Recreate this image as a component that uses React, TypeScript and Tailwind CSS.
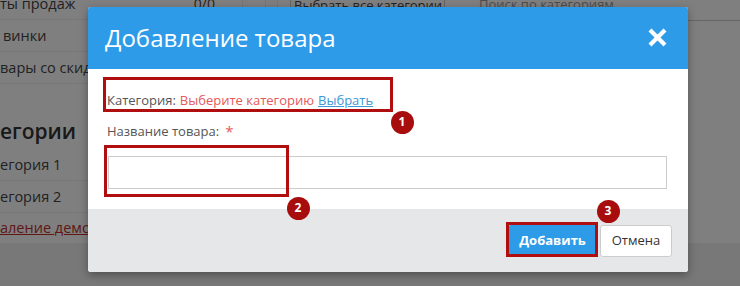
import React from "react";

const font = { fontFamily: '"Open Sans", "Noto Sans", Arial, sans-serif' };

function Badge({ n, x, y }: { n: number; x: number; y: number }) {
  return (
    <div
      className="absolute flex items-center justify-center w-[23px] h-[23px] rounded-full bg-[#a80d0d] text-white text-[12px] font-bold leading-none"
      style={{ left: x - 11.5, top: y - 11.5 }}
    >
      {n}
    </div>
  );
}

export default function App() {
  return (
    <div className="relative w-[740px] h-[286px] overflow-hidden bg-white text-[#444]" style={font}>
      {/* Background page */}
      <div className="flex w-full h-full">
        <div className="w-[242px] flex flex-col text-[14.5px] whitespace-nowrap">
          <div className="flex items-center justify-between h-[32px] -mt-[12px] border-b border-[#eee] pr-[27px]">
            <span>ты продаж</span>
            <span className="text-[14px]">0/0</span>
          </div>
          <div className="flex items-center h-[32px] border-b border-[#eee] pl-[3px]">винки</div>
          <div className="flex items-center h-[32px] border-b border-[#eee]">вары со скидк</div>
          <div className="mt-[36px] h-[22px] flex items-center text-[21px] font-semibold text-[#333] leading-none">егории</div>
          <div className="flex items-center h-[32px] border-b border-[#eee] mt-[7px]">егория 1</div>
          <div className="flex items-center h-[32px] border-b border-[#eee]">егория 2</div>
          <div className="flex items-center h-[30px] text-[#c0302e] underline">аление демо к</div>
        </div>
        <div className="flex-1 flex flex-col">
          <div className="flex items-start h-[21px] border-b border-[#ccc] whitespace-nowrap">
            <div className="w-[23px] h-full border-l border-[#eee]" />
            <div className="w-[12px] h-full border-l border-[#eee]" />
            <div className="w-[13px] h-full border-l border-[#eee]" />
            <div className="w-[155px] -mt-[6px] h-[20px] border border-[#ccc] rounded-[2px] text-[13px] pl-[3px] leading-[20px] overflow-hidden">
              Выбрать все категории
            </div>
            <div className="w-[22px]" />
            <div className="flex-1 -mt-[6px] text-[13px] pl-[12px] text-[#999] leading-[20px] overflow-hidden">Поиск по категориям</div>
          </div>
        </div>
      </div>
      {/* Overlay */}
      <div className="absolute inset-0 bg-black/50" />
      <div className="absolute left-0 right-0 top-[243px] bottom-0 bg-black/5" />

      {/* Modal */}
      <div className="absolute left-[88px] top-[7px] w-[600px] rounded-[3px] overflow-hidden bg-white shadow-[0_3px_8px_rgba(0,0,0,0.35)]">
        <div className="h-[62px] bg-[#2d9be8] flex items-center justify-between pl-[17px] pr-[21px]">
          <div className="text-white text-[24px] leading-none -mt-[1px]">Добавление товара</div>
          <svg width="19" height="19" viewBox="0 0 19 19" className="mt-[-1px]">
            <path d="M2 2 L17 17 M17 2 L2 17" stroke="white" strokeWidth="4.2" strokeLinecap="butt" />
          </svg>
        </div>
        <div className="pl-[19px] pr-[21px] pt-[22px] pb-[20px]">
          <div className="h-[18px] flex items-center text-[13px] text-[#555] leading-none">
            <span>Категория:</span>
            <span className="ml-[4px] text-[#e5585a]">Выберите категорию</span>
            <span className="ml-[4px] text-[#3d98d6] underline">Выбрать</span>
          </div>
          <div className="mt-[13px] h-[18px] flex items-center text-[13px] text-[#555] leading-none">
            <span>Название товара:</span>
            <span className="ml-[6px] text-[#e5585a] text-[15px]">*</span>
          </div>
          <div className="mt-[16px] ml-[1px] h-[33px] border border-[#ccc] bg-white" />
        </div>
        <div className="h-[63px] bg-[#e6e7e9] flex items-start justify-end gap-[3px] pt-[16px] pr-[16px]">
          <button className="w-[89px] h-[32px] bg-[#2d9be8] text-white text-[13px] font-bold rounded-[3px]" style={font}>
            Добавить
          </button>
          <button className="w-[72px] h-[32px] bg-white border border-[#ccc] text-[#333] text-[13px] rounded-[3px]" style={font}>
            Отмена
          </button>
        </div>
      </div>

      {/* Annotations */}
      <div className="absolute left-[103px] top-[77px] w-[290px] h-[35px] border-[3px] border-[#b10f0f]" />
      <Badge n={1} x={402} y={122} />
      <div className="absolute left-[104px] top-[145px] w-[185px] h-[52px] border-[3px] border-[#b10f0f]" />
      <Badge n={2} x={298} y={208} />
      <div className="absolute left-[506px] top-[222px] w-[92px] h-[35px] border-[3px] border-[#b10f0f]" />
      <Badge n={3} x={608} y={211} />
    </div>
  );
}
